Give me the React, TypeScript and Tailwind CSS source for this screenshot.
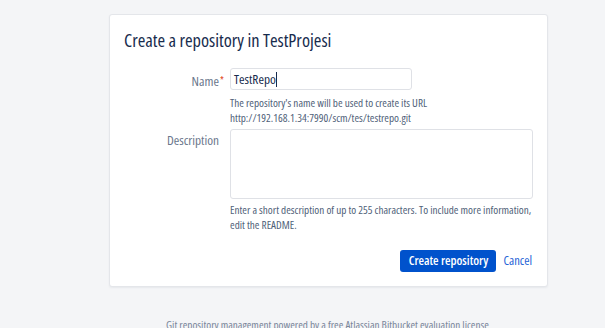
const font = { fontFamily: '"Open Sans", "Noto Sans", Arial, sans-serif' };

const App = () => {
    return (
        <div className="h-[328px] overflow-hidden bg-[#f4f5f7] [font-stretch:75%]" style={font}>
            <div className="pt-[14px] pl-[109px]">
                <div className="w-[439px] h-[273px] bg-white rounded-[3px] border border-[#e4e6ea] shadow-[0_1px_2px_rgba(9,30,66,0.06)] px-[14px] pt-[13px]">
                    <h2 className="text-[18.4px] leading-[24px] text-[#172b4d]">
                        Create a repository in TestProjesi
                    </h2>

                    <div className="grid grid-cols-[95px_1fr] gap-x-[11px] mt-[16px]">
                        <div className="text-right">
                            <label className="relative text-[13.3px] leading-[22px] text-[#6b778c]">
                                Name
                                <span className="absolute left-full top-[-3px] ml-[1px] text-[#de350b] text-[10px]">*</span>
                            </label>
                        </div>
                        <div>
                            <div className="w-[182px] h-[22px] border border-[#dfe1e6] rounded-[3px] flex items-center pl-[3px]">
                                <span className="text-[13.3px] font-medium text-[#172b4d] border-r border-[#172b4d] leading-[15px]">TestRepo</span>
                            </div>
                            <p className="text-[11.2px] leading-[15px] text-[#505f79] mt-[5px]">
                                The repository's name will be used to create its URL
                                <br />
                                http://192.168.1.34:7990/scm/tes/testrepo.git
                            </p>
                        </div>

                        <label className="text-right text-[13.3px] leading-[22px] text-[#6b778c] mt-[4px]">
                            Description
                        </label>
                        <div className="mt-[4px]">
                            <div className="h-[70px] border border-[#dfe1e6] rounded-[3px]" />
                            <p className="text-[11.2px] leading-[15px] text-[#505f79] mt-[3px]">
                                Enter a short description of up to 255 characters. To include more information, edit the README.
                            </p>
                        </div>
                    </div>

                    <div className="flex justify-end items-center gap-[7px] mt-[18px] pr-[1px]">
                        <button className="h-[22px] w-[96px] rounded-[3px] bg-[#0052cc] text-white text-[12.6px] font-semibold leading-[22px]">
                            Create repository
                        </button>
                        <button className="text-[12.6px] text-[#2563d6] leading-[22px]">Cancel</button>
                    </div>
                </div>
            </div>
            <p className="mt-[30px] ml-[166px] text-[11.2px] text-[#7a869a] leading-[15px] whitespace-nowrap">
                Git repository management powered by a free Atlassian Bitbucket evaluation license
            </p>
        </div>
    );
};

export default App;
